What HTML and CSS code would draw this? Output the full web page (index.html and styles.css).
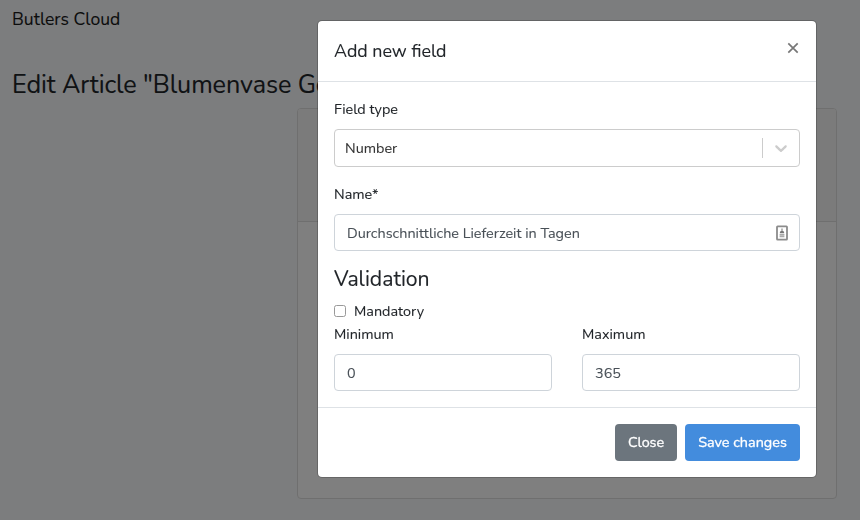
FILE: index.html
```html
<!DOCTYPE html>
<html lang="en">
<head>
<meta charset="utf-8">
<title>Butlers Cloud</title>
<link rel="stylesheet" href="styles.css">
</head>
<body>
<div class="page">
  <header class="brand">Butlers Cloud</header>
  <h1 class="page-title">Edit Article "Blumenvase Gold"</h1>
  <section class="card"><div class="card-header"></div><div class="card-body"></div></section>
</div>
<div class="backdrop">
  <div class="modal" role="dialog">
    <div class="modal-header">
      <h2 class="modal-title">Add new field</h2>
      <button class="dismiss" aria-label="Dismiss"><svg width="12" height="12" viewBox="0 0 12 12"><path d="M1.3 1.3l9.4 9.4M10.7 1.3l-9.4 9.4" fill="none" stroke="#777" stroke-width="1.7"/></svg></button>
    </div>
    <div class="modal-body">
      <div class="group">
        <div class="label">Field type</div>
        <div class="select">
          <span class="value">Number</span>
          <span class="separator"></span>
          <span class="arrow"><svg width="20" height="20" viewBox="0 0 20 20"><path d="M4.516 7.548c0.436-0.446 1.043-0.481 1.576 0l3.908 3.747 3.908-3.747c0.533-0.481 1.141-0.446 1.574 0 0.436 0.445 0.408 1.197 0 1.615-0.406 0.418-4.695 4.502-4.695 4.502-0.217 0.223-0.502 0.335-0.787 0.335s-0.57-0.112-0.789-0.335c0 0-4.287-4.084-4.695-4.502s-0.436-1.17 0-1.615z" fill="#ccc"/></svg></span>
        </div>
      </div>
      <div class="group">
        <div class="label">Name*</div>
        <div class="input"><span>Durchschnittliche Lieferzeit in Tagen</span>
          <svg class="autofill" width="12" height="16" viewBox="0 0 12 16"><rect x="1" y="1.4" width="10" height="13.2" rx=".6" fill="#fff" stroke="#8c8c8c" stroke-width="1.8"/><path d="M6 3.4v2" stroke="#999" stroke-width="1.4"/><path d="M3.8 8.2c0-3.6 4.4-3.6 4.4 0z" fill="#777"/><path d="M3.6 9.7h4.8M3.6 11.4h4.8" stroke="#aaa" stroke-width="1.5"/></svg>
        </div>
      </div>
      <h3 class="section-title">Validation</h3>
      <div class="check"><span class="box"></span><span>Mandatory</span></div>
      <div class="row">
        <div class="col"><div class="label">Minimum</div><div class="input"><span>0</span></div></div>
        <div class="col"><div class="label">Maximum</div><div class="input"><span>365</span></div></div>
      </div>
    </div>
    <div class="modal-footer">
      <button class="btn btn-close">Close</button>
      <button class="btn btn-save">Save changes</button>
    </div>
  </div>
</div>
</body>
</html>
```
FILE: styles.css
```css
* { box-sizing: border-box; }
body {
  margin: 0;
  height: 520px;
  overflow: hidden;
  background: #f8fafc;
  color: #212529;
  font: 14.4px/23px Nunito, Lato, sans-serif;
  -webkit-text-stroke: .1px;
}
h1, h2, h3 { margin: 0; font-weight: 400; }
.page { padding: 5px 23px 0 12px; }
.brand { height: 28px; font-size: 17.55px; line-height: 28px; color: #191919; }
.page-title { margin-top: 36px; height: 32px; font-size: 25.2px; line-height: 32px; letter-spacing: -.09px; white-space: nowrap; }
.card {
  margin: 7px 0 0 285px;
  width: 540px;
  height: 391px;
  background: #fff;
  border: 1px solid #dfdfdf;
  border-radius: 4px;
}
.card-header { height: 113px; background: #f7f7f7; border-bottom: 1px solid #dfdfdf; border-radius: 3px 3px 0 0; }
.backdrop { position: fixed; inset: 0; padding: 20px 0 0 317px; background: rgba(0, 0, 0, .5); }
.modal {
  width: 500px;
  background: #fff;
  background-clip: padding-box;
  border: 1px solid rgba(0, 0, 0, .2);
  border-radius: 5px;
}
.modal-header {
  display: flex;
  justify-content: space-between;
  height: 61px;
  padding: 16px;
  border-bottom: 1px solid #dee2e6;
}
.modal-title { font-size: 17.85px; line-height: 28px; }
.dismiss { display: flex; width: 12px; height: 12px; margin: 5px 1px 0 0; padding: 0; border: 0; background: none; }
.modal-body { padding: 16px; height: 325px; }
.group { margin-bottom: 16px; }
.label { height: 23px; margin-bottom: 8px; }
.select { display: flex; align-items: center; height: 38px; border: 1px solid #ccc; border-radius: 4px; color: #333; }
.value { flex: 1; padding-left: 10px; }
.separator { width: 1px; height: 20px; background: #ccc; }
.arrow { display: flex; padding: 8px; }
.input {
  display: flex;
  align-items: center;
  justify-content: space-between;
  height: 37px;
  padding: 0 11px 0 12px;
  border: 1px solid #ced4da;
  border-radius: 4px;
  color: #495057;
}
.input span { padding-top: 1px; line-height: 24px; }
.section-title { height: 26px; margin-bottom: 7px; font-size: 21.2px; line-height: 25px; }
.check { display: flex; align-items: center; height: 23px; }
.box { width: 12px; height: 12px; margin: 0 8px 1px 0; border: 1px solid #999; border-radius: 2.5px; }
.row { display: grid; grid-template-columns: 1fr 1fr; gap: 30px; }
.modal-footer { display: flex; justify-content: flex-end; gap: 8px; height: 70px; padding: 16px; border-top: 1px solid #dee2e6; }
.btn { height: 37px; padding: 0; border: 0; border-radius: 4px; color: #fff; font: 14.4px/23px Nunito, Lato, sans-serif; -webkit-text-stroke: .3px #fff; }
.btn-close { width: 62px; background: #6c757d; letter-spacing: -.1px; }
.btn-save { width: 115px; background: #438cdd; }
```
